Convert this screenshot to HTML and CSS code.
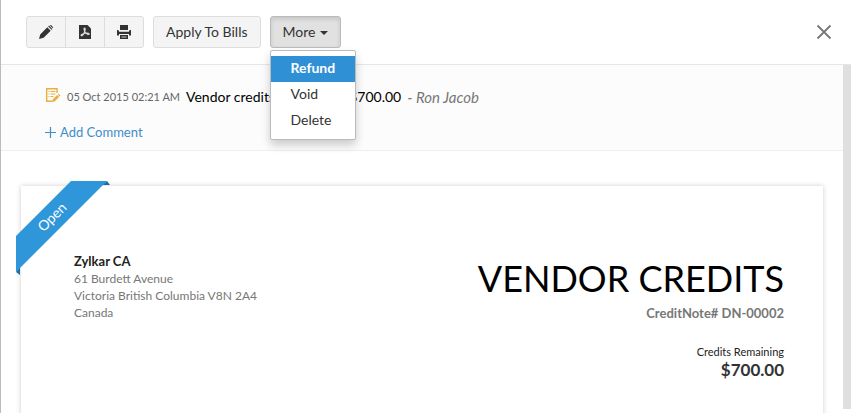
FILE: index.html
```html
<!DOCTYPE html>
<html lang="en">
<head>
<meta charset="utf-8">
<title>Vendor Credits</title>
<link rel="stylesheet" href="styles.css">
</head>
<body>
<div class="page">
  <header class="toolbar">
    <div class="btn-group">
      <button class="btn icon-btn" type="button" aria-label="Edit">
        <svg width="16" height="16" viewBox="0 0 16 16" fill="#333"><path d="M1 15l1.200-4.600L9.300 3.300l3.400 3.400-7.100 7.100zM10.200 2.400l.8-.8 3.400 3.400-.8.8zM11.800 1.300q.8-.6 1.500 0l1.400 1.400q.6.7 0 1.500z"/></svg>
      </button>
      <button class="btn icon-btn" type="button" aria-label="Download PDF">
        <svg width="14" height="16" viewBox="0 0 14 16"><path fill="#333" d="M1 1h8.500L13 4.500V15H1z"/><path fill="none" stroke="#ddd" stroke-width="1.100" d="M6.500 4c1.200 0 .6 2.300.1 3.800C5.800 10 4.300 12 3.300 11.700c-1.300-.6 2-2.300 4.200-2.500 2.500-.3 4 .3 3.600 1-.6.900-3.400-.8-4.300-2.500C6 6.200 5.700 4 6.500 4z"/></svg>
      </button>
      <button class="btn icon-btn" type="button" aria-label="Print">
        <svg width="16" height="16" viewBox="0 0 16 16"><path fill="#333" d="M4 1h8v5H4zM1 6h1.500v1h11V6H15v5.500h-2V10H3v1.500H1zM4 11h8v4H4z"/><path stroke="#eee" d="M5.500 13h5M3 7.500h10" stroke-width=".8"/></svg>
      </button>
    </div>
    <button class="btn" type="button">Apply To Bills</button>
    <div class="dropdown">
      <button class="btn btn-open" type="button" aria-expanded="true">More <span class="caret"></span></button>
      <ul class="menu">
        <li><a class="active" href="#refund">Refund</a></li>
        <li><a href="#void">Void</a></li>
        <li><a href="#delete">Delete</a></li>
      </ul>
    </div>
    <button class="close" type="button" aria-label="Close">
      <svg width="16" height="16" viewBox="0 0 16 16" fill="none" stroke="#777" stroke-width="1.800"><path d="M1.500 1.500l13 13M14.500 1.500l-13 13"/></svg>
    </button>
  </header>
  <div class="body">
    <main class="content">
      <section class="comments">
        <p class="comment">
          <svg width="16" height="16" viewBox="0 0 16 16" fill="none" stroke="#e8ae3f"><path stroke-width="1.400" d="M12 6V1.700H1.700v12.600H7"/><path stroke-width="1.200" d="M3.500 4.500h1M5.500 4.500h5M3.500 7h1M5.500 7h5M3.500 9.500h1M5.500 9.500h3"/><path fill="#e8ae3f" stroke="none" d="M7 15l.6-2.600 4.500-4.300 2 2-4.500 4.300zM12.700 7.500l.9-.8 2 2-.9.800z"/></svg>
          <span class="when">05 Oct 2015 02:21 AM</span>
          <span>Vendor credits created for $700.00</span>
          <em>- Ron Jacob</em>
        </p>
        <a class="add" href="#comment"><svg width="11" height="11" viewBox="0 0 11 11" stroke="#408dc8" stroke-width="1.200"><path d="M5.500 0v11M0 5.500h11"/></svg>Add Comment</a>
      </section>
      <article class="paper">
        <div class="ribbon">
          <svg width="94" height="94" viewBox="0 0 94 94"><path fill="#1c6ea6" d="M91 0l3 4h-8zM0 91l4 3V86z"/><path fill="#2e96d9" d="M55 0h36L0 91V55z"/></svg>
          <span>Open</span>
        </div>
        <address class="vendor">
          <strong>Zylkar CA</strong>
          <span>61 Burdett Avenue</span>
          <span>Victoria British Columbia V8N 2A4</span>
          <span>Canada</span>
        </address>
        <div class="summary">
          <h1>VENDOR CREDITS</h1>
          <p class="number">CreditNote# DN-00002</p>
          <p class="label">Credits Remaining</p>
          <p class="amount">$700.00</p>
        </div>
      </article>
    </main>
    <div class="scroll"></div>
  </div>
</div>
</body>
</html>
```
FILE: styles.css
```css
* { box-sizing: border-box; }
body {
  margin: 0;
  background: #fff;
  color: #222;
  font: 14px/20px Lato, "Liberation Sans", sans-serif;
}
p, h1, ul { margin: 0; padding: 0; }
a { text-decoration: none; }
svg { display: block; flex: none; }
.page {
  display: flex;
  flex-direction: column;
  height: 100vh;
  overflow: hidden;
  border-left: 1px solid #bbb;
}
.toolbar {
  display: flex;
  flex: none;
  align-items: center;
  gap: 9px;
  padding: 16px 19px 16px 25px;
  border-bottom: 1px solid #e6e6e6;
}
.btn {
  display: flex;
  align-items: center;
  justify-content: center;
  height: 32px;
  padding: 0 12px;
  border: 1px solid #ddd;
  border-radius: 3px;
  background: #f4f4f4;
  color: #333;
  font: inherit;
}
.btn-group { display: flex; }
.icon-btn { width: 40px; padding: 0; }
.icon-btn + .icon-btn { margin-left: -1px; }
.icon-btn:first-child { border-radius: 3px 0 0 3px; }
.icon-btn:nth-child(2) { border-radius: 0; }
.icon-btn:last-child { border-radius: 0 3px 3px 0; }
.btn-open {
  border-color: #bbb;
  background: #e1e1e1;
  box-shadow: inset 0 2px 4px rgba(0, 0, 0, .13);
}
.caret {
  margin: 2px 0 0 5px;
  border: 4px solid transparent;
  border-top-color: #333;
  border-bottom: 0;
}
.dropdown { position: relative; }
.menu {
  position: absolute;
  z-index: 2;
  top: 34px;
  left: 0;
  width: 86px;
  padding: 5px 0;
  border: 1px solid #bbb;
  border-radius: 2px;
  background: #fff;
  box-shadow: 0 5px 10px rgba(0, 0, 0, .2);
  list-style: none;
}
.menu a { display: block; padding: 2px 20px 4px; color: #333; }
.menu .active { background: #3090d5; color: #fff; font-weight: bold; }
.close {
  margin-left: auto;
  padding: 0;
  border: 0;
  background: none;
}
.body { display: flex; flex: 1; min-height: 0; }
.content { flex: 1; overflow: hidden; }
.scroll { width: 8px; margin-bottom: 4px; background: #dfdfdf; }
.comments {
  padding: 22px 44px 8px;
  border-bottom: 1px solid #eee;
  background: #fcfcfc;
}
.comment { display: flex; gap: 6px; margin-bottom: 15px; color: #000; white-space: nowrap; }
.when { color: #666; font-size: 11px; }
.comment em { color: #777; font-size: 15px; }
.add { display: flex; align-items: center; gap: 4px; color: #408dc8; font-size: 13px; }
.paper {
  position: relative;
  display: flex;
  justify-content: space-between;
  min-height: 100%;
  margin: 35px 20px 0;
  padding: 67px 39px 0 53px;
  background: #fff;
  box-shadow: 0 0 5px rgba(0, 0, 0, .2);
}
.ribbon { position: absolute; top: -5px; left: -5px; }
.ribbon span {
  position: absolute;
  top: 26px;
  left: 16px;
  width: 40px;
  color: #fff;
  text-align: center;
  transform: rotate(-45deg);
}
.vendor {
  display: flex;
  flex-direction: column;
  color: #777;
  font-size: 12px;
  font-style: normal;
  line-height: 17px;
}
.vendor strong { color: #222; font-size: 13px; }
.summary { text-align: right; }
.summary h1 { color: #000; font-size: 36px; font-weight: normal; line-height: 50px; }
.number { margin-bottom: 20px; color: #777; font-size: 13px; font-weight: bold; }
.label { font-size: 11px; line-height: 17px; }
.amount { color: #333; font-size: 17px; font-weight: bold; }
```
